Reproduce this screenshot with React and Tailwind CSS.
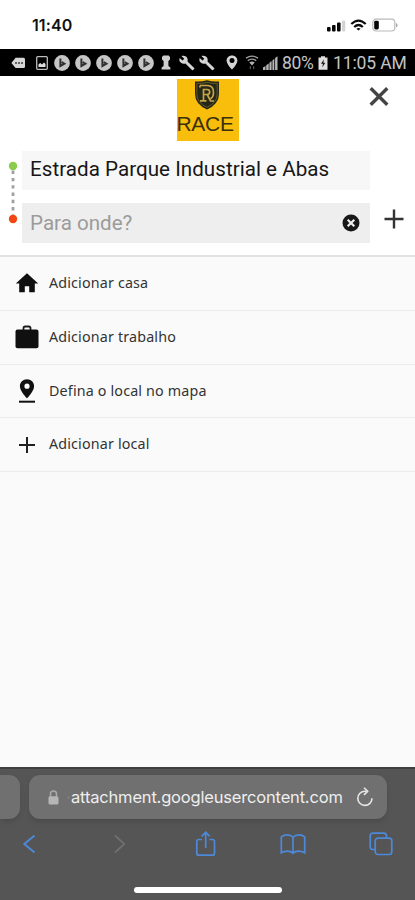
import React from "react";

const places = [
  { label: "Adicionar casa", icon: HomeIcon },
  { label: "Adicionar trabalho", icon: BagIcon },
  { label: "Defina o local no mapa", icon: MapIcon },
  { label: "Adicionar local", icon: AddIcon },
];

function HomeIcon() {
  return (
    <svg className="w-[24px] h-[20px]" viewBox="0 0 24 20" fill="#101010">
      <path d="M12 0.3L0.8 10.4H4.2V19.3H9.8V13.2H14.2V19.3H19.8V10.4H23.2Z" />
    </svg>
  );
}

function BagIcon() {
  return (
    <svg className="w-[24px] h-[24px]" viewBox="0 0 24 24">
      <path d="M8.5 5V3.2Q8.5 1.5 10.2 1.5H13.8Q15.5 1.5 15.5 3.2V5" fill="none" stroke="#1a1a1a" strokeWidth="1.8" />
      <rect x="0.5" y="4.5" width="23" height="18.7" rx="2" fill="#101010" />
    </svg>
  );
}

function MapIcon() {
  return (
    <svg className="w-[18px] h-[24px]" viewBox="0 0 18 24">
      <path fillRule="evenodd" d="M9 0.3C4.9 0.3 1.9 3.3 1.9 7.2C1.9 12.2 9 19.3 9 19.3S16.1 12.2 16.1 7.2C16.1 3.3 13.1 0.3 9 0.3ZM9 4.6A2.6 2.6 0 1 1 9 9.8A2.6 2.6 0 0 1 9 4.6Z" fill="#101010" />
      <path d="M1 22.7H17" stroke="#101010" strokeWidth="2" />
    </svg>
  );
}

function AddIcon() {
  return (
    <svg className="w-[18px] h-[18px]" viewBox="0 0 18 18">
      <path d="M9 1V17M1 9H17" stroke="#202020" strokeWidth="2" />
    </svg>
  );
}

function Wrench({ className }) {
  return (
    <svg className={className} viewBox="0 0 16 16" fill="#d5d5d5">
      <path d="M15.2 12.9L8.5 6.6C9 4.9 8.6 3 7.3 1.8C5.9 0.6 4 0.3 2.4 1L5.3 3.8L3.5 5.6L0.7 2.9C0 4.5 0.4 6.4 1.7 7.6C3 8.8 4.8 9.1 6.4 8.6L13 15.1C13.3 15.4 13.7 15.4 14 15.1L15.2 13.9C15.5 13.6 15.5 13.2 15.2 12.9Z" />
    </svg>
  );
}

function PhoneBar() {
  return (
    <div className="flex h-[49px] bg-white">
      <span className="ml-[32px] mt-[15px] w-[115px] font-['Inter'] text-[16px] leading-[20px] font-semibold tracking-[0.1px] text-[#111]">
        11:40
      </span>
      <svg className="ml-auto mt-[20px] w-[19px] h-[12px]" viewBox="0 0 19 12" fill="#080808">
        <rect y="7" width="3.6" height="4.4" rx="1" />
        <rect x="5" y="5" width="3.6" height="6.4" rx="1" />
        <rect x="10" y="2.6" width="3.6" height="8.8" rx="1" />
        <rect x="15" y="0.4" width="3.3" height="11" rx="1" fill="#d4d4d4" />
      </svg>
      <svg className="ml-[4px] mt-[19px] w-[17px] h-[13px]" viewBox="0 0 17 13" fill="none" stroke="#0a0a0a" strokeWidth="2.2">
        <path d="M1.3 5Q8.5 -1.9 15.7 5M4.2 8Q8.5 4 12.8 8" />
        <path d="M8.5 11.6L6.4 9.7Q8.5 8.1 10.6 9.7Z" fill="#0a0a0a" stroke="none" />
      </svg>
      <svg className="ml-[5px] mr-[17px] mt-[18px] w-[26px] h-[14px]" viewBox="0 0 26 14">
        <rect x="0.8" y="1.2" width="22" height="11.8" rx="3.2" fill="none" stroke="#bababa" strokeWidth="1.2" />
        <rect x="2.2" y="2.8" width="4.6" height="8.7" rx="1.4" fill="#050505" />
        <path d="M24 5V9.4Q25.6 8.8 25.6 7.2Q25.6 5.6 24 5Z" fill="#aaa" />
      </svg>
    </div>
  );
}

function AndroidBar() {
  return (
    <div className="flex h-[27px] items-center bg-black pl-[11px] text-[#c4c4c4] font-['Roboto']">
      <svg className="w-[15px] h-[12px] shrink-0" viewBox="0 0 15 12">
        <path d="M4.6 0.7H12.5Q14 0.7 14 2.2V9.6Q14 11.1 12.5 11.1H4.6L0.4 6Z" fill="#d6d6d6" />
        <path d="M4.2 6H5.8M7.2 6H8.8M10.2 6H11.8" stroke="#111" strokeWidth="1.7" />
      </svg>
      <svg className="ml-[10px] w-[12px] h-[14px] shrink-0" viewBox="0 0 12 14">
        <rect x="0.7" y="0.7" width="10.6" height="12.6" rx="1" fill="none" stroke="#bcbcbc" strokeWidth="1.3" />
        <path d="M2.5 11V8.2L4.3 7L6 8.6L8 6.5L9.5 8V11Z" fill="#ddd" />
      </svg>
      <div className="ml-[6.4px] flex shrink-0 gap-[4.8px]">
        {[0, 1, 2, 3, 4].map((n) => (
          <svg key={n} className="w-[16px] h-[16px]" viewBox="0 0 16 16">
            <circle cx="8" cy="8" r="7.9" fill="#c6c6c6" />
            <path d="M6.4 3.6V11L10.4 8.8L7.8 7.2" fill="none" stroke="#303030" strokeWidth="2" />
          </svg>
        ))}
      </div>
      <svg className="ml-[7.4px] w-[10px] h-[15px] shrink-0" viewBox="0 0 10 15" fill="#cfcfcf">
        <path d="M2.4 0.6H7.6L9 2V4.4L7.4 6V11L9.4 12.4V14.6H0.6V12.4L2.6 11V6L1 4.4V2Z" />
      </svg>
      <Wrench className="ml-[8px] w-[16px] h-[16px] shrink-0" />
      <Wrench className="ml-[4px] w-[16px] h-[16px] shrink-0" />
      <svg className="ml-[11px] w-[12px] h-[15px] shrink-0" viewBox="0 0 12 15">
        <path fillRule="evenodd" d="M6 0.4C2.9 0.4 0.6 2.6 0.6 5.6C0.6 9.4 6 14.6 6 14.6S11.4 9.4 11.4 5.6C11.4 2.6 9.1 0.4 6 0.4ZM6 3A2.5 2.5 0 1 1 6 8A2.5 2.5 0 0 1 6 3Z" fill="#d4d4d4" />
      </svg>
      <svg className="ml-[7px] w-[14px] h-[15px] shrink-0" viewBox="0 0 14 15" fill="none" stroke="#a0a0a0" strokeWidth="1.4">
        <path d="M1 3.2Q7 -0.9 13 3.2M2.8 5.6Q7 2.7 11.2 5.6" />
        <path d="M7 10.4L4.3 7.4Q7 5.8 9.7 7.4Z" fill="#b0b0b0" stroke="none" />
        <path d="M5.4 11.2V14M8.6 11.2V14" stroke="#555" strokeWidth="1.2" />
      </svg>
      <svg className="ml-[4px] w-[15px] h-[14px] shrink-0" viewBox="0 0 15 14" fill="#b5b5b5">
        <path d="M0 14V11.6L2.5 10V14ZM3.2 14V9.2L5.7 7.4V14ZM6.4 14V6.8L8.6 5V14ZM9.4 14V4.4L11.3 2.8V14ZM12.1 14V2L14.5 0.3V14Z" />
      </svg>
      <span className="ml-[4px] w-[33px] shrink-0 text-[17.5px] leading-[20px] tracking-[-0.3px]">80%</span>
      <svg className="ml-[3px] w-[10px] h-[14px] shrink-0" viewBox="0 0 10 14">
        <path d="M3 1.6V0.3H7V1.6H9.5V13.7H0.5V1.6Z" fill="#e0e0e0" />
        <path d="M6 3.2L3 7.7H5L4.2 11.5L7.3 6.7H5.3Z" fill="#111" />
      </svg>
      <span className="ml-[5px] shrink-0 whitespace-nowrap text-[17.5px] leading-[20px] tracking-[-0.1px]">11:05 AM</span>
    </div>
  );
}

function RaceLogo() {
  return (
    <div className="ml-[177px] mt-[3px] flex h-[62px] w-[62px] flex-col items-start bg-[#f9bd0b]">
      <svg className="ml-[16.5px] mt-px h-[30px] w-[26px]" viewBox="0 0 26 30">
        <path d="M1 1.4Q7 2 13 0.3Q19 2 25 1.4V14Q25 24 13 29.6Q1 24 1 14Z" fill="#252719" />
        <path d="M2.8 3.4Q8 3.8 13 2.3Q18 3.8 23.2 3.4V14Q23.2 22.6 13 27.4Q2.8 22.6 2.8 14Z" fill="none" stroke="#76632b" strokeWidth="0.8" />
        <path d="M6 5.5H13.5Q19.5 5.5 19.5 12.5Q19.5 17 16.5 18.8M9.5 20.5V9.5H13Q15.7 9.5 15.7 12T13 14.5H9.5M13.2 14.5L16.5 21H20M6 20.8H12.5M6 5.5V7.5" fill="none" stroke="#c7a448" strokeWidth="1.7" />
      </svg>
      <span className="ml-[-0.5px] font-['Liberation_Sans'] text-[21px] leading-[27px] tracking-[-0.3px] text-[#3a300c]">RACE</span>
    </div>
  );
}

function SearchHeader() {
  return (
    <header className="h-[179px] shrink-0 bg-white">
      <div className="flex h-[75px] items-start">
        <RaceLogo />
        <svg className="ml-[129px] mt-[10px] h-[22px] w-[22px]" viewBox="0 0 22 22">
          <path d="M2.7 2.2L19.3 18.8M19.3 2.2L2.7 18.8" stroke="#444" strokeWidth="3.4" />
        </svg>
      </div>

      <div className="flex">
        <svg className="ml-[8px] mt-[9px] h-[66px] w-[10px]" viewBox="0 0 10 66">
          <path d="M5 10.6V56" stroke="#a0a0a0" strokeWidth="2.8" strokeDasharray="3.4 3.9" />
          <circle cx="5" cy="6" r="4.2" fill="#8bcb4d" />
          <circle cx="5" cy="59" r="4.2" fill="#f44613" />
        </svg>
        <div className="ml-[4px] w-[348px] font-['Roboto'] text-[20.6px]">
          <div className="h-[39px] bg-[#f7f7f7] pl-[8px] leading-[37px] tracking-[0.03px] whitespace-nowrap text-[#161616]">
            Estrada Parque Industrial e Abas
          </div>
          <div className="mt-[13px] flex h-[40px] items-center bg-[#eee] pl-[8px] text-[#9b9b9b]">
            <span>Para onde?</span>
            <svg className="ml-auto mr-[10px] h-[18px] w-[18px]" viewBox="0 0 18 18">
              <circle cx="9" cy="9" r="8.5" fill="#181818" />
              <path d="M5.7 5.7L12.3 12.3M12.3 5.7L5.7 12.3" stroke="#eee" strokeWidth="2.2" />
            </svg>
          </div>
        </div>
        <svg className="ml-[14px] mt-[58px] h-[20px] w-[20px]" viewBox="0 0 20 20">
          <path d="M10 0.5V19.5M0.5 10H19.5" stroke="#333" strokeWidth="2.4" />
        </svg>
      </div>
    </header>
  );
}

function BrowserBar() {
  return (
    <footer className="flex h-[133px] shrink-0 flex-col border-t-2 border-[#3e3e3e] bg-[#555]">
      <div className="mt-[6px] flex h-[44px] shrink-0">
        <div className="w-[20px] rounded-r-[11px] bg-[#707070] shadow-md" />
        <div className="ml-[9px] flex w-[358px] items-center rounded-[11px] bg-[#707070] shadow-md">
          <svg className="ml-[19px] h-[15px] w-[11px]" viewBox="0 0 11 15">
            <path d="M2.5 7V4Q2.5 1 5.5 1T8.5 4V7" fill="none" stroke="#aaa" strokeWidth="1.5" />
            <rect x="0.5" y="6.2" width="10" height="8.3" rx="1.6" fill="#b5b5b5" />
          </svg>
          <span className="ml-[8px] w-[4px] text-[10px] text-[#999]">·</span>
          <span className="w-[272px] whitespace-nowrap font-['Inter'] text-[16.5px] tracking-[-0.18px] text-[#eee]">
            attachment.googleusercontent.com
          </span>
          <svg className="ml-[13px] h-[20px] w-[18px]" viewBox="0 0 18 20" fill="none" stroke="#e7e7e7" strokeWidth="1.6">
            <path d="M10.6 4.2H9A7.1 7.1 0 1 0 16 11.3" />
            <path d="M8 0.7L11.7 4.3L8 7.9" />
          </svg>
        </div>
      </div>

      <div className="mt-[11px] flex h-[28px] shrink-0 items-center text-[#4d89d8]">
        <svg className="ml-[22px] h-[20px] w-[14px]" viewBox="0 0 14 20" fill="none" stroke="currentColor" strokeWidth="2">
          <path d="M12.5 1.5L2.3 10L12.5 18.5" />
        </svg>
        <svg className="ml-[78px] h-[20px] w-[12px]" viewBox="0 0 12 20" fill="none" stroke="#707070" strokeWidth="1.7">
          <path d="M1 1.5L10.3 10L1 18.5" />
        </svg>
        <svg className="ml-[69px] h-[28px] w-[22px]" viewBox="0 0 22 28" fill="none" stroke="currentColor" strokeWidth="1.7">
          <path d="M7 9.5H3.8Q1.8 9.5 1.8 11.5V23.2Q1.8 25.2 3.8 25.2H17.5Q19.5 25.2 19.5 23.2V11.5Q19.5 9.5 17.5 9.5H14.3" />
          <path d="M10.7 18V2.5M6.7 6.3L10.7 2.3L14.7 6.3" />
        </svg>
        <svg className="ml-[63px] h-[22px] w-[26px]" viewBox="0 0 26 22" fill="none" stroke="currentColor" strokeWidth="1.7">
          <path d="M13 4.2Q11 1.8 7.3 1.8Q3.6 1.8 1.3 3.8V19.8Q4 18.1 7.3 18.1Q11 18.1 13 20.3Q15 18.1 18.7 18.1Q22 18.1 24.7 19.8V3.8Q22.4 1.8 18.7 1.8Q15 1.8 13 4.2ZM13 4.2V20.3" />
        </svg>
        <svg className="ml-[63px] h-[24px] w-[24px]" viewBox="0 0 24 24" fill="none" stroke="currentColor" strokeWidth="1.7">
          <path d="M6 17.5H4Q1.2 17.5 1.2 14.7V4Q1.2 1.2 4 1.2H14.7Q17.5 1.2 17.5 4V6" />
          <rect x="6.2" y="6.2" width="16.6" height="16.3" rx="2.7" />
        </svg>
      </div>
      <div className="ml-[134px] mt-[29px] h-[6px] w-[148px] shrink-0 rounded-full bg-white" />
    </footer>
  );
}

function App() {
  return (
    <div className="flex h-[900px] w-[415px] flex-col overflow-hidden bg-[#fafafa]">
      <PhoneBar />
      <AndroidBar />
      <SearchHeader />

      {/* Saved places */}
      <main className="flex-1 border-t-2 border-[#e2e2e2]">
        {places.map(({ label, icon: Icon }) => (
          <div key={label} className="flex h-[53.75px] items-center border-b border-[#ececec]">
            <div className="ml-[15px] flex w-[24px] justify-center">
              <Icon />
            </div>
            <span className="ml-[10px] pb-px font-['Noto_Sans'] text-[14.3px] tracking-[0.16px] text-[#333]">{label}</span>
          </div>
        ))}
      </main>
      <BrowserBar />
    </div>
  );
}

export default App;
